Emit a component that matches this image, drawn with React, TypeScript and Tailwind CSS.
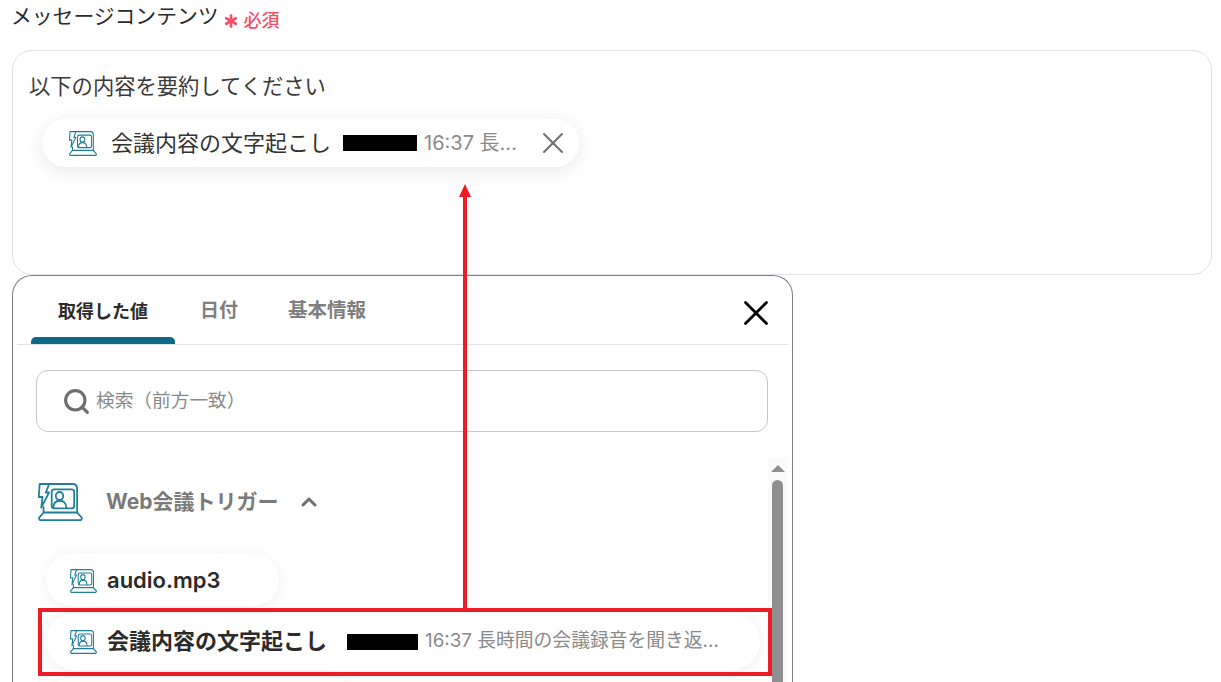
import { Search, X, ChevronUp, Asterisk } from 'lucide-react';

const font = { fontFamily: 'Inter, "Noto Sans CJK JP", sans-serif' };

const MeetingIcon = ({ className }: { className: string }) => (
    <svg viewBox="0 0 46 36" preserveAspectRatio="none" fill="none" stroke="#1f7f99" strokeWidth="1.8" strokeLinejoin="round" strokeLinecap="round" className={className}>
        <path d="M11.3 1H35.5Q40 1 40 5.5V28" />
        <path d="M5.7 23V28" />
        <rect x="14" y="6" width="23" height="18" rx="2.5" />
        <circle cx="22" cy="12.3" r="3.8" />
        <path d="M15.7 23.5C15.7 19 18.5 16.8 22.3 16.8C26 16.8 29 19 29 23.5" />
        <path d="M1.7 1H11.3L8 9H11.3L3.3 23.3L4.7 13.3H0.8Z" />
        <path d="M5.7 28H40L45 33Q45 35.2 43 35.2H3Q1 35.2 1 33Z" />
    </svg>
);

const Redacted = ({ className }: { className: string }) => (
    <span className={`inline-block h-[16px] bg-black shrink-0 ${className}`} />
);

export default function App() {
    return (
        <div style={font} className="relative h-[682px] w-[1221px] overflow-hidden bg-white text-[#2b2b2b]">
            {/* Titre du champ */}
            <div className="flex h-[50px] items-start pl-[11px] pt-[2px]">
                <span className="text-[20.8px] leading-[30px]">メッセージコンテンツ</span>
                <span className="ml-[1px] mt-[4px] flex items-center text-[18px] font-medium leading-[30px] text-[#f5506a]">
                    <Asterisk className="mr-[2px] h-[22px] w-[22px]" strokeWidth={3} />必須
                </span>
            </div>

            {/* Zone de saisie */}
            <div className="ml-[12px] h-[225px] w-[1200px] rounded-[20px] border border-[#e0e0e8] px-[16px] pt-[20px]">
                <p className="text-[21.3px] leading-[30px] text-[#3a3a3a]">以下の内容を要約してください</p>
                <div className="ml-[13px] mt-[18px] flex h-[48px] w-[537px] items-center rounded-full bg-white pl-[27px] pr-[8px] shadow-[0_4px_20px_rgba(0,0,0,0.09)]">
                    <MeetingIcon className="h-[25px] w-[28px] shrink-0" />
                    <span className="ml-[14px] text-[22px] text-[#333333]">会議内容の文字起こし</span>
                    <Redacted className="ml-[12px] w-[74px]" />
                    <span className="ml-[7px] flex-1 text-[20px] text-[#8a8a8a]">16:37 長...</span>
                    <X className="h-[36px] w-[36px] text-[#6f6f6f]" strokeWidth={1.3} />
                </div>
            </div>

            {/* Panneau de sélection */}
            <div className="ml-[12px] h-[420px] w-[781px] overflow-hidden rounded-t-[20px] border border-b-0 border-[#808080] bg-white px-[4px]">
                <div className="flex h-[69px] border-b border-[#e4e4e4] pl-[14px] pr-[11px]">
                    <div className="relative flex h-[68px] w-[144px] items-center justify-center pt-[2px]">
                        <span className="text-[18px] font-bold text-[#2b2b2b]">取得した値</span>
                        <div className="absolute bottom-0 left-0 h-[7px] w-[144px] rounded-t-[5px] bg-[#0b6a85]" />
                    </div>
                    <div className="ml-[25px] flex h-[68px] items-center pt-[2px] text-[19px] font-bold text-[#7f7f7f]">日付</div>
                    <div className="ml-[50px] flex h-[68px] items-center pt-[2px] text-[19.5px] font-bold text-[#7f7f7f]">基本情報</div>
                    <X className="ml-auto mt-[16px] h-[42px] w-[42px] text-black" strokeWidth={1.6} />
                </div>

                <div className="ml-[19px] mt-[25px] flex h-[62px] w-[732px] items-center rounded-[12px] border border-[#c8c8c8] pl-[25px]">
                    <Search className="h-[29px] w-[29px] text-[#6f6f6f]" strokeWidth={2.6} />
                    <span className="ml-[5px] text-[18.7px] text-[#8a8a8a]">検索（前方一致）</span>
                </div>

                <div className="mt-[26px] flex">
                    <div className="w-[751px]">
                        <div className="ml-[21px] mt-[25px] flex h-[38px] items-center">
                            <MeetingIcon className="h-[38px] w-[45px] shrink-0" />
                            <span className="ml-[23px] text-[21px] font-bold text-[#7a7a7a]">Web会議トリガー</span>
                            <ChevronUp className="ml-[18px] h-[24px] w-[24px] text-[#6f6f6f]" strokeWidth={3} />
                        </div>
                        <div className="ml-[29px] mt-[32px] flex h-[53px] w-[233px] items-center rounded-full bg-white pl-[24px] pt-[2px] shadow-[0_2px_14px_rgba(0,0,0,0.07)]">
                            <MeetingIcon className="h-[24px] w-[27px] shrink-0" />
                            <span className="ml-[10px] text-[22px] font-semibold text-[#2b2b2b]">audio.mp3</span>
                        </div>
                        <div className="ml-[29px] mt-[7px] flex h-[57px] w-[714px] items-center rounded-full bg-white pl-[24px] shadow-[0_2px_14px_rgba(0,0,0,0.07)]">
                            <MeetingIcon className="h-[24px] w-[27px] shrink-0" />
                            <span className="ml-[10px] text-[22px] font-semibold text-[#2b2b2b]">会議内容の文字起こし</span>
                            <Redacted className="ml-[20px] w-[71px]" />
                            <span className="ml-[7px] text-[18.8px] text-[#8a8a8a]">16:37 長時間の会議録音を聞き返...</span>
                        </div>
                        <div className="ml-[29px] mt-[7px] h-[53px] w-[310px] rounded-full bg-white shadow-[0_2px_14px_rgba(0,0,0,0.07)]" />
                    </div>

                    {/* Barre de défilement */}
                    <div className="flex w-[19px] flex-col items-center bg-[#fafafa] pt-[7px]">
                        <span className="h-0 w-0 border-x-[7px] border-b-[7px] border-x-transparent border-b-[#8f8f8f]" />
                        <span className="mt-[8px] h-[300px] w-[11px] shrink-0 rounded-full bg-[#8f8f8f]" />
                    </div>
                </div>
            </div>

            {/* Annotation rouge */}
            <div className="absolute left-[38px] top-[608px] h-[68px] w-[734px] border-[4px] border-[#ee1c25]" />
            <div className="absolute left-[463px] top-[196px] h-[412px] w-[4px] bg-[#ee1c25]" />
            <div className="absolute left-[459px] top-[184px] h-0 w-0 border-x-[6px] border-b-[13px] border-x-transparent border-b-[#ee1c25]" />
        </div>
    );
}
